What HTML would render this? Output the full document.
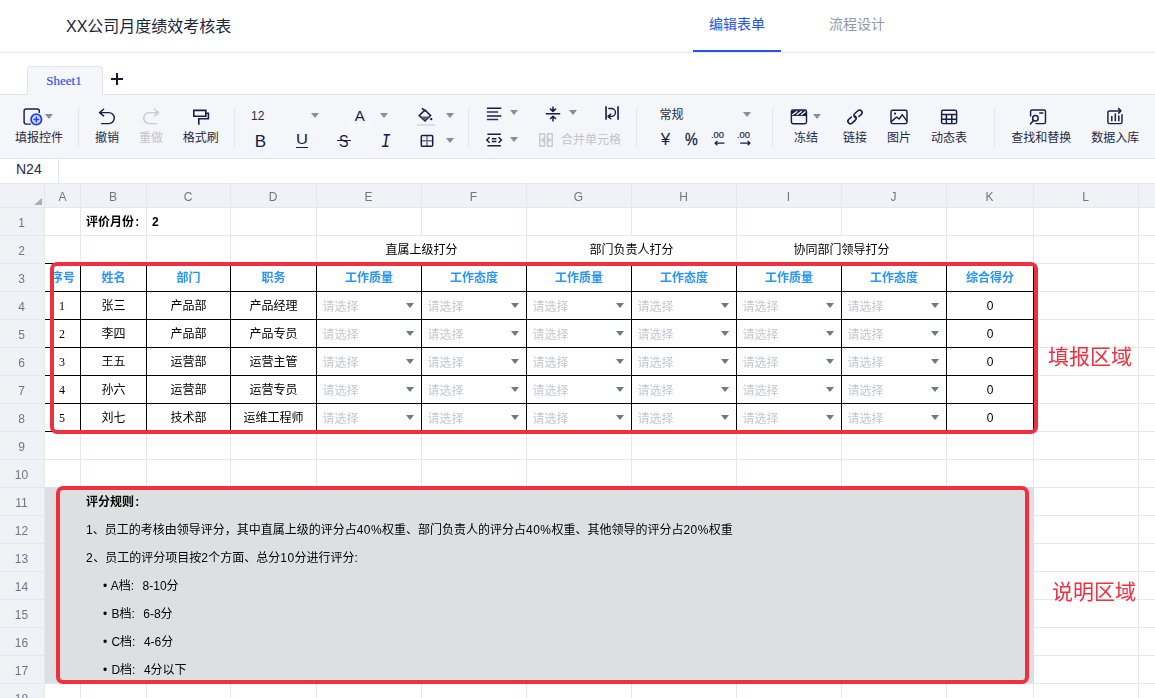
<!DOCTYPE html><html lang="zh-CN"><head><meta charset="utf-8"><title>XX公司月度绩效考核表</title><style>
*{box-sizing:border-box;margin:0;padding:0}
html,body{width:1155px;height:698px;overflow:hidden;background:#fff}
body{position:relative;font-family:"Liberation Sans","Noto Sans CJK SC",sans-serif;color:#1f2a44}
.abs{position:absolute}
#hdr{position:absolute;left:0;top:0;width:1155px;height:53px;border-bottom:1px solid #e6e8f0;background:#fff}
#title{position:absolute;left:66px;top:15px;font-size:16px;line-height:24px;color:#1c2438;white-space:nowrap}
.tab{position:absolute;top:12px;font-size:14px;line-height:24px;white-space:nowrap}
#tab1{left:709px;color:#2955e7}
#tab2{left:829px;color:#9297a6}
#tabline{position:absolute;left:693px;top:50px;width:88px;height:2px;background:#2955e7}
#sheetbar{position:absolute;left:0;top:53px;width:1155px;height:41px;background:#fff}
#sheettab{position:absolute;left:27px;top:66px;width:76px;height:29px;padding-right:2px;border:1px solid #e1e4ee;border-bottom:none;border-radius:4px 4px 0 0;background:#f5f6fa;z-index:3;
 font-family:"Liberation Serif","Noto Serif CJK SC",serif;font-size:13px;line-height:28px;text-align:center;color:#2a4ff0;-webkit-text-stroke:0.15px #2a4ff0}
#toolbar{position:absolute;left:0;top:94px;width:1155px;height:65px;background:#f5f6fa;border-top:1px solid #e1e4ee;border-bottom:1px solid #e1e4ee}
.tl{position:absolute;font-size:12px;line-height:16px;white-space:nowrap;color:#1f2a44;text-align:center}
.dis{color:#c0c4cc}
.sep{position:absolute;width:1px;background:#e4e6ee;top:107px;height:40px}
.caret{position:absolute;width:0;height:0;border-left:4px solid transparent;border-right:4px solid transparent;border-top:5px solid #8489a3}
#fbar{position:absolute;left:0;top:159px;width:1155px;height:24px;background:#fff}
#fcell{position:absolute;left:0;top:0;width:59px;height:24px;border-right:1px solid #e4e6ee;font-size:14px;line-height:20px;padding-left:16px;color:#1f2a44}
#grid{position:absolute;left:0;top:183px;width:1155px;height:515px;overflow:hidden;background:#fff}
.ch{position:absolute;top:183px;height:24px;background:#f1f2f5;font-size:12px;line-height:28px;text-align:center;color:#70758f}
.rh{position:absolute;left:0;width:43px;font-size:12px;text-align:center;color:#70758f;line-height:28px}
.vl{position:absolute;width:1px;background:#e6e6f2}
.hl{position:absolute;height:1px;background:#e6e6f2}
.c{position:absolute;font-size:12px;line-height:28px;white-space:nowrap;color:#000;text-align:center;height:28px}
.hd{color:#2894ff;font-weight:bold}
.ph{color:#c3c6d4;text-align:left;padding-left:5.5px;line-height:30px}
.tri{position:absolute;width:0;height:0;border-left:4.5px solid transparent;border-right:4.5px solid transparent;border-top:5px solid #71768f}
.bv{position:absolute;width:1px;background:#000}
.bh{position:absolute;height:1px;background:#000}
.red{position:absolute;border:4px solid #f0303f;border-radius:7px}
.lbl{position:absolute;font-size:21px;line-height:28px;color:#f0303f;white-space:nowrap}
.rule{position:absolute;font-size:12px;line-height:28px;height:28px;color:#000;white-space:nowrap;word-spacing:0.9px}
.n{letter-spacing:0.45px}
.cl{margin-left:1.2px}
.ser{font-family:"Liberation Serif","Noto Sans CJK SC",serif}
svg{position:absolute;overflow:visible}
#gridwrap{position:absolute;left:0;top:0;width:1155px;height:698px;will-change:transform;pointer-events:none}
</style></head><body>
<div id="hdr"><div id="title">XX公司月度绩效考核表</div><div class="tab" id="tab1">编辑表单</div><div class="tab" id="tab2">流程设计</div><div id="tabline"></div></div>
<div id="sheetbar"></div>
<div id="toolbar"></div>
<div id="sheettab">Sheet1</div>
<svg style="left:111px;top:73px" width="12" height="12" viewBox="0 0 12 12"><path d="M6 0v12M0 6h12" stroke="#141b33" stroke-width="2" fill="none"/></svg>
<svg style="left:20px;top:104px" width="40" height="26" viewBox="20 104 40 26" fill="none" stroke="#152048" stroke-width="1.45" stroke-linecap="round" stroke-linejoin="round"><path d="M39.3 112.5V111a2 2 0 0 0-2-2H26.1a2 2 0 0 0-2 2v11.1a2 2 0 0 0 2 2H30.5"/><circle cx="36.3" cy="119.4" r="7" fill="#f5f6fa" stroke="none"/><circle cx="36.3" cy="119.4" r="5.2" fill="#d3dbff" stroke="#1f40fb" stroke-width="1.8"/><path d="M34 119.4h4.6M36.3 117.1v4.6" stroke="#1f40fb" stroke-width="1.5"/></svg>
<svg style="left:45.2px;top:114.0px" width="8" height="5" viewBox="0 0 8 5"><path d="M0 0H8L4.0 5Z" fill="#878ba6"/></svg>
<div class="tl " style="left:11.0px;top:130px;width:56px">填报控件</div>
<div class="sep" style="left:78px"></div>
<svg style="left:95px;top:104px" width="24" height="24" viewBox="95 104 24 24" fill="none" stroke="#152048" stroke-width="1.45" stroke-linecap="round" stroke-linejoin="round"><path d="M103.6 109.3L99.6 112.6L103.6 115.9M99.8 112.6H108.8a5.5 5.5 0 0 1 0 11H101.6"/></svg>
<div class="tl " style="left:91.0px;top:130px;width:32px">撤销</div>
<svg style="left:139px;top:104px" width="24" height="24" viewBox="139 104 24 24" fill="none" stroke="#152048" stroke-width="1.45" stroke-linecap="round" stroke-linejoin="round"><g stroke="#c9cbd1"><path d="M154.6 109.3L158.6 112.6L154.6 115.9M158.4 112.6H149.2a5.5 5.5 0 0 0 0 11H156.6"/></g></svg>
<div class="tl dis" style="left:135.0px;top:130px;width:32px">重做</div>
<svg style="left:190px;top:104px" width="24" height="24" viewBox="190 104 24 24" fill="none" stroke="#152048" stroke-width="1.45" stroke-linecap="round" stroke-linejoin="round"><path d="M193.8 110.4h12v5.8h-12zM205.8 113.3h2.6v5.4h-9.6v5.2" stroke-width="1.6" stroke-linejoin="miter" stroke-linecap="square"/></svg>
<div class="tl " style="left:178.7px;top:130px;width:44px">格式刷</div>
<div class="sep" style="left:234px"></div>
<div class="tl" style="left:251px;top:108px;text-align:left">12</div>
<svg style="left:311.0px;top:113.0px" width="8" height="5" viewBox="0 0 8 5"><path d="M0 0H8L4.0 5Z" fill="#878ba6"/></svg>
<div class="abs" style="left:254.8px;top:132.2px;font-size:17px;line-height:20px;color:#152048">B</div>
<div class="abs" style="left:295.8px;top:129.2px;font-size:14.5px;line-height:20px;color:#152048;transform:scaleX(1.14);transform-origin:0 0">U</div>
<div class="abs" style="left:296px;top:146.6px;width:12px;height:1.6px;background:#152048"></div>
<div class="abs" style="left:339.2px;top:131.2px;font-size:16.5px;line-height:20px;color:#152048;transform:scaleX(0.86);transform-origin:0 0;">S</div>
<div class="abs" style="left:337px;top:140.1px;width:14px;height:1.3px;background:#152048"></div>
<div class="abs ser" style="left:381.4px;top:131.6px;font-size:20px;line-height:20px;color:#152048;font-style:italic;font-family:'Liberation Mono',monospace;transform:scaleX(0.8);transform-origin:0 0">I</div>
<div class="abs" style="left:354.8px;top:106.9px;font-size:15px;line-height:18px;color:#152048">A</div>
<div class="abs" style="left:351px;top:124px;width:18px;height:2px;background:#fff"></div>
<svg style="left:380.0px;top:113.0px" width="8" height="5" viewBox="0 0 8 5"><path d="M0 0H8L4.0 5Z" fill="#878ba6"/></svg>
<svg style="left:416px;top:104px" width="20" height="20" viewBox="416 104 20 20" fill="none" stroke="#152048" stroke-width="1.45" stroke-linecap="round" stroke-linejoin="round"><path d="M419.2 115.6L425 110L430.6 115.6L425 121Z" stroke-width="1.5" stroke-linejoin="miter"/><path d="M420.6 116.4H429.4L425 120.4Z" fill="#5a6180" stroke="none"/><path d="M422.4 108.6L425 111" stroke-width="1.5"/><circle cx="431.2" cy="119.1" r="1.2" fill="#152048" stroke="none"/></svg>
<div class="abs" style="left:417px;top:124px;width:18px;height:2px;background:#dcdde3"></div>
<svg style="left:446.0px;top:113.0px" width="8" height="5" viewBox="0 0 8 5"><path d="M0 0H8L4.0 5Z" fill="#878ba6"/></svg>
<svg style="left:418px;top:132px" width="18" height="18" viewBox="418 132 18 18" fill="none" stroke="#152048" stroke-width="1.45" stroke-linecap="round" stroke-linejoin="round"><path d="M427 135.5V146.2M421.4 140.8H432.6" stroke="#6a7090" stroke-width="1.4"/><rect x="421.3" y="135.4" width="11.4" height="10.8" rx="1" stroke-width="1.5"/></svg>
<svg style="left:446.0px;top:138.2px" width="8" height="5" viewBox="0 0 8 5"><path d="M0 0H8L4.0 5Z" fill="#878ba6"/></svg>
<div class="sep" style="left:468px"></div>
<svg style="left:484px;top:104px" width="20" height="20" viewBox="484 104 20 20" fill="none" stroke="#152048" stroke-width="1.45" stroke-linecap="round" stroke-linejoin="round"><path d="M486.9 108.2H501.3M486.9 115.9H501.3" stroke-width="1.5" stroke-linecap="butt"/><path d="M486.9 112.1H498.1M486.9 119.6H498.1" stroke-width="1.5" stroke-linecap="butt" stroke="#2c3556"/></svg>
<svg style="left:510.0px;top:110.2px" width="8" height="5" viewBox="0 0 8 5"><path d="M0 0H8L4.0 5Z" fill="#878ba6"/></svg>
<svg style="left:544px;top:104px" width="20" height="20" viewBox="544 104 20 20" fill="none" stroke="#152048" stroke-width="1.45" stroke-linecap="round" stroke-linejoin="round"><path d="M545.8 113.8H560.2M553 106.4V111M550 108.6L553 111.4L556 108.6M553 121.4V116.6M550 119L553 116.2L556 119" stroke-width="1.5" stroke-linecap="butt"/></svg>
<svg style="left:569.0px;top:110.2px" width="8" height="5" viewBox="0 0 8 5"><path d="M0 0H8L4.0 5Z" fill="#878ba6"/></svg>
<svg style="left:604px;top:104px" width="18" height="18" viewBox="604 104 18 18" fill="none" stroke="#152048" stroke-width="1.45" stroke-linecap="round" stroke-linejoin="round"><path d="M606.05 106.2V119.7M618.05 106.2V119.7" stroke-width="1.9" stroke-linecap="butt" stroke="#333e6a"/><path d="M608.8 108.5H611.5a3.95 3.95 0 0 1 0 7.9H608.6M610.8 114L608 116.4L610.8 118.8" stroke-width="1.4"/></svg>
<svg style="left:484px;top:132px" width="20" height="18" viewBox="484 132 20 18" fill="none" stroke="#152048" stroke-width="1.45" stroke-linecap="round" stroke-linejoin="round"><path d="M487.4 134.2H500.8M487.4 145.7H500.8" stroke-width="1.6" stroke-linecap="butt"/><path d="M489.6 137.2L486.8 140L489.6 142.8M498.6 137.2L501.4 140L498.6 142.8" stroke-width="1.5" stroke-linecap="butt" stroke-linejoin="miter"/><path d="M491.8 138.7H496.4M491.8 141.5H496.4" stroke-width="1.4" stroke-linecap="butt"/></svg>
<svg style="left:510.0px;top:137.4px" width="8" height="5" viewBox="0 0 8 5"><path d="M0 0H8L4.0 5Z" fill="#878ba6"/></svg>
<svg style="left:538px;top:132px" width="16" height="16" viewBox="538 132 16 16" fill="none" stroke="#152048" stroke-width="1.45" stroke-linecap="round" stroke-linejoin="round"><g stroke="#c9cacf" stroke-width="1.4" stroke-linecap="butt"><rect x="539.7" y="133.8" width="4.8" height="12.5" rx="0.4"/><rect x="547.5" y="133.8" width="4.8" height="12.5" rx="0.4"/><path d="M539.7 140H544.6M542.6 138L544.9 140L542.6 142M552.3 140H547.4M549.4 138L547.1 140L549.4 142" stroke-width="1.5"/><path d="M546 134V146" stroke="#e4e5ea" stroke-width="1.6"/></g></svg>
<div class="tl dis" style="left:561px;top:131.5px;text-align:left">合并单元格</div>
<div class="sep" style="left:636px"></div>
<div class="tl" style="left:659.5px;top:107.2px;text-align:left">常规</div>
<svg style="left:743.0px;top:112.3px" width="8" height="5" viewBox="0 0 8 5"><path d="M0 0H8L4.0 5Z" fill="#878ba6"/></svg>
<div class="abs" style="left:660.8px;top:130.2px;font-size:17px;line-height:20px;color:#152048">¥</div>
<div class="abs" style="left:685.4px;top:130px;font-size:17px;line-height:20px;color:#152048;-webkit-text-stroke:0.3px #152048;transform:scaleX(0.84);transform-origin:0 0">%</div>
<div class="abs" style="left:711.2px;top:130.2px;font-size:12px;line-height:12px;color:#152048;transform:scale(0.78);transform-origin:0 0;-webkit-text-stroke:0.2px #152048">.00</div>
<div class="abs" style="left:737px;top:130.2px;font-size:12px;line-height:12px;color:#152048;transform:scale(0.78);transform-origin:0 0;-webkit-text-stroke:0.2px #152048">.00</div>
<svg style="left:712px;top:138px" width="16" height="10" viewBox="712 138 16 10" fill="none" stroke="#152048" stroke-width="1.45" stroke-linecap="round" stroke-linejoin="round"><path d="M724.4 143.1H715.4M717.4 141L715 143.1L717.4 145.2" stroke-width="1.25" stroke-linecap="butt"/></svg>
<svg style="left:738px;top:138px" width="16" height="10" viewBox="738 138 16 10" fill="none" stroke="#152048" stroke-width="1.45" stroke-linecap="round" stroke-linejoin="round"><path d="M740.2 143.1H749.6M747.6 141L750 143.1L747.6 145.2" stroke-width="1.25" stroke-linecap="butt"/></svg>
<div class="sep" style="left:772px"></div>
<svg style="left:788px;top:106px" width="22" height="22" viewBox="788 106 22 22" fill="none" stroke="#152048" stroke-width="1.45" stroke-linecap="round" stroke-linejoin="round"><rect x="791.5" y="110.4" width="15" height="5.6" fill="#152048" stroke="none"/><path d="M792.2 115L797.2 111.2M796.6 115L801.6 111.2M801 115L806 111.2" stroke="#f5f6fa" stroke-width="1.4" stroke-linecap="butt"/><rect x="791.4" y="109.9" width="15.1" height="13.8" rx="1.6"/></svg>
<svg style="left:813.0px;top:114.0px" width="8" height="5" viewBox="0 0 8 5"><path d="M0 0H8L4.0 5Z" fill="#878ba6"/></svg>
<div class="tl " style="left:790.0px;top:130px;width:32px">冻结</div>
<svg style="left:844px;top:106px" width="22" height="22" viewBox="844 106 22 22" fill="none" stroke="#152048" stroke-width="1.45" stroke-linecap="round" stroke-linejoin="round"><path d="M858.9 116.5 L861.4 114.3 A2.50 2.50 0 0 0 858.2 110.5 L854.8 113.5 A2.50 2.50 0 0 0 856.4 117.9M851.3 117.1 L848.6 119.5 A2.50 2.50 0 0 0 851.8 123.3 L855.4 120.1 A2.50 2.50 0 0 0 853.8 115.7" stroke-width="1.6"/></svg>
<div class="tl " style="left:839.0px;top:130px;width:32px">链接</div>
<svg style="left:888px;top:106px" width="22" height="22" viewBox="888 106 22 22" fill="none" stroke="#152048" stroke-width="1.45" stroke-linecap="round" stroke-linejoin="round"><rect x="891" y="110.2" width="16" height="13.4" rx="1.6"/><circle cx="895" cy="113.6" r="1.1" fill="#152048" stroke="none"/><path d="M891.6 121.4L896.6 117L899.2 119L902.2 114.6L906.6 120.6" stroke-width="1.4"/></svg>
<div class="tl " style="left:883.0px;top:130px;width:32px">图片</div>
<svg style="left:938px;top:106px" width="22" height="22" viewBox="938 106 22 22" fill="none" stroke="#152048" stroke-width="1.45" stroke-linecap="round" stroke-linejoin="round"><rect x="941.6" y="110.2" width="15" height="13.4" rx="1.6"/><path d="M941.6 114.6H956.6M941.6 119.2H956.6M946.4 114.6V123.6M951.8 114.6V123.6" stroke-linecap="butt" stroke-width="1.5"/></svg>
<div class="tl " style="left:927.0px;top:130px;width:44px">动态表</div>
<div class="sep" style="left:994px"></div>
<svg style="left:1026px;top:106px" width="24" height="22" viewBox="1026 106 24 22" fill="none" stroke="#152048" stroke-width="1.45" stroke-linecap="round" stroke-linejoin="round"><path d="M1030.6 116V111.5a1.6 1.6 0 0 1 1.6-1.6H1043.9a1.6 1.6 0 0 1 1.6 1.6V122a1.6 1.6 0 0 1-1.6 1.6H1036"/><circle cx="1035.4" cy="118.2" r="2.8" stroke-width="1.5"/><path d="M1033.4 120.4L1030.4 123.9M1039.8 113H1042.8" stroke-width="1.5"/></svg>
<div class="tl " style="left:1007.3px;top:130px;width:68px">查找和替换</div>
<svg style="left:1104px;top:104px" width="24" height="24" viewBox="1104 104 24 24" fill="none" stroke="#152048" stroke-width="1.45" stroke-linecap="round" stroke-linejoin="round"><path d="M1120 110.9H1109.5a1.6 1.6 0 0 0-1.6 1.6V122a1.6 1.6 0 0 0 1.6 1.6H1120.4a1.6 1.6 0 0 0 1.6-1.6V114.6"/><path d="M1118.6 108.6L1120.9 110.9L1118.6 113.2" stroke-width="1.5"/><path d="M1111.8 116V121.2M1115.3 113.4V121.2M1118.8 115.4V121.2" stroke-width="1.5" stroke-linecap="butt"/></svg>
<div class="tl " style="left:1087.2px;top:130px;width:56px">数据入库</div>
<div id="fbar"><div id="fcell">N24</div></div>
<div id="gridwrap">
<div class="abs" style="left:0;top:183px;width:1155px;height:24px;background:#f1f2f5"></div>
<div class="abs" style="left:0;top:207px;width:44px;height:491px;background:#f1f2f5"></div>
<svg style="left:34px;top:198px" width="8" height="7" viewBox="0 0 8 7"><path d="M8 0V7H0Z" fill="#acacbb"/></svg>
<div class="ch" style="left:45px;width:35px">A</div>
<div class="ch" style="left:80px;width:66px">B</div>
<div class="ch" style="left:146px;width:84px">C</div>
<div class="ch" style="left:230px;width:86px">D</div>
<div class="ch" style="left:316px;width:105px">E</div>
<div class="ch" style="left:421px;width:105px">F</div>
<div class="ch" style="left:526px;width:105px">G</div>
<div class="ch" style="left:631px;width:105px">H</div>
<div class="ch" style="left:736px;width:105px">I</div>
<div class="ch" style="left:841px;width:105px">J</div>
<div class="ch" style="left:946px;width:87px">K</div>
<div class="ch" style="left:1033px;width:105px">L</div>
<div class="ch" style="left:1138px;width:105px">M</div>
<div class="rh" style="top:209px;height:28px">1</div>
<div class="rh" style="top:237px;height:28px">2</div>
<div class="rh" style="top:265px;height:28px">3</div>
<div class="rh" style="top:293px;height:28px">4</div>
<div class="rh" style="top:321px;height:28px">5</div>
<div class="rh" style="top:349px;height:28px">6</div>
<div class="rh" style="top:377px;height:28px">7</div>
<div class="rh" style="top:405px;height:28px">8</div>
<div class="rh" style="top:433px;height:28px">9</div>
<div class="rh" style="top:461px;height:28px">10</div>
<div class="rh" style="top:489px;height:28px">11</div>
<div class="rh" style="top:517px;height:28px">12</div>
<div class="rh" style="top:545px;height:28px">13</div>
<div class="rh" style="top:573px;height:28px">14</div>
<div class="rh" style="top:601px;height:28px">15</div>
<div class="rh" style="top:629px;height:28px">16</div>
<div class="rh" style="top:657px;height:28px">17</div>
<div class="rh" style="top:685px;height:28px">18</div>
<div class="hl" style="left:0;top:183px;width:1155px"></div>
<div class="hl" style="left:0;top:207px;width:1155px"></div>
<div class="hl" style="left:0;top:235px;width:1155px"></div>
<div class="hl" style="left:0;top:263px;width:1155px"></div>
<div class="hl" style="left:0;top:291px;width:1155px"></div>
<div class="hl" style="left:0;top:319px;width:1155px"></div>
<div class="hl" style="left:0;top:347px;width:1155px"></div>
<div class="hl" style="left:0;top:375px;width:1155px"></div>
<div class="hl" style="left:0;top:403px;width:1155px"></div>
<div class="hl" style="left:0;top:431px;width:1155px"></div>
<div class="hl" style="left:0;top:459px;width:1155px"></div>
<div class="hl" style="left:0;top:487px;width:1155px"></div>
<div class="hl" style="left:0;top:515px;width:1155px"></div>
<div class="hl" style="left:0;top:543px;width:1155px"></div>
<div class="hl" style="left:0;top:571px;width:1155px"></div>
<div class="hl" style="left:0;top:599px;width:1155px"></div>
<div class="hl" style="left:0;top:627px;width:1155px"></div>
<div class="hl" style="left:0;top:655px;width:1155px"></div>
<div class="hl" style="left:0;top:683px;width:1155px"></div>
<div class="hl" style="left:0;top:711px;width:1155px"></div>
<div class="vl" style="left:44px;top:183px;height:515px"></div>
<div class="vl" style="left:80px;top:183px;height:515px"></div>
<div class="vl" style="left:146px;top:183px;height:515px"></div>
<div class="vl" style="left:230px;top:183px;height:515px"></div>
<div class="vl" style="left:316px;top:183px;height:515px"></div>
<div class="vl" style="left:421px;top:183px;height:515px"></div>
<div class="vl" style="left:526px;top:183px;height:515px"></div>
<div class="vl" style="left:631px;top:183px;height:515px"></div>
<div class="vl" style="left:736px;top:183px;height:515px"></div>
<div class="vl" style="left:841px;top:183px;height:515px"></div>
<div class="vl" style="left:946px;top:183px;height:515px"></div>
<div class="vl" style="left:1033px;top:183px;height:515px"></div>
<div class="vl" style="left:1138px;top:183px;height:515px"></div>
<div class="vl" style="left:1243px;top:183px;height:515px"></div>
<div class="abs" style="left:45px;top:487px;width:989px;height:196px;background:#dde0e3"></div>
<div class="c " style="left:81px;top:208px;width:65px;text-align:left;padding-left:5px;font-weight:bold">评价月份<span class="cl">:</span></div>
<div class="c " style="left:147px;top:208px;width:83px;text-align:left;padding-left:5px;font-weight:bold">2</div>
<div class="abs" style="left:421px;top:236px;width:1px;height:27px;background:#fff"></div>
<div class="abs" style="left:631px;top:236px;width:1px;height:27px;background:#fff"></div>
<div class="abs" style="left:841px;top:236px;width:1px;height:27px;background:#fff"></div>
<div class="c " style="left:317px;top:236px;width:209px;">直属上级打分</div>
<div class="c " style="left:527px;top:236px;width:209px;">部门负责人打分</div>
<div class="c " style="left:737px;top:236px;width:209px;">协同部门领导打分</div>
<div class="c hd" style="left:46px;top:264px;width:34px;">序号</div>
<div class="c hd" style="left:81px;top:264px;width:65px;">姓名</div>
<div class="c hd" style="left:147px;top:264px;width:83px;">部门</div>
<div class="c hd" style="left:231px;top:264px;width:85px;">职务</div>
<div class="c hd" style="left:317px;top:264px;width:104px;">工作质量</div>
<div class="c hd" style="left:422px;top:264px;width:104px;">工作态度</div>
<div class="c hd" style="left:527px;top:264px;width:104px;">工作质量</div>
<div class="c hd" style="left:632px;top:264px;width:104px;">工作态度</div>
<div class="c hd" style="left:737px;top:264px;width:104px;">工作质量</div>
<div class="c hd" style="left:842px;top:264px;width:104px;">工作态度</div>
<div class="c hd" style="left:947px;top:264px;width:86px;">综合得分</div>
<div class="c ser" style="left:46px;top:292px;width:34px;padding-right:2px">1</div>
<div class="c " style="left:81px;top:292px;width:65px;">张三</div>
<div class="c " style="left:147px;top:292px;width:83px;">产品部</div>
<div class="c " style="left:231px;top:292px;width:85px;">产品经理</div>
<div class="c ph" style="left:317px;top:292px;width:104px;">请选择</div>
<div class="tri" style="left:406px;top:303px"></div>
<div class="c ph" style="left:422px;top:292px;width:104px;">请选择</div>
<div class="tri" style="left:511px;top:303px"></div>
<div class="c ph" style="left:527px;top:292px;width:104px;">请选择</div>
<div class="tri" style="left:616px;top:303px"></div>
<div class="c ph" style="left:632px;top:292px;width:104px;">请选择</div>
<div class="tri" style="left:721px;top:303px"></div>
<div class="c ph" style="left:737px;top:292px;width:104px;">请选择</div>
<div class="tri" style="left:826px;top:303px"></div>
<div class="c ph" style="left:842px;top:292px;width:104px;">请选择</div>
<div class="tri" style="left:931px;top:303px"></div>
<div class="c " style="left:947px;top:292px;width:86px;">0</div>
<div class="c ser" style="left:46px;top:320px;width:34px;padding-right:2px">2</div>
<div class="c " style="left:81px;top:320px;width:65px;">李四</div>
<div class="c " style="left:147px;top:320px;width:83px;">产品部</div>
<div class="c " style="left:231px;top:320px;width:85px;">产品专员</div>
<div class="c ph" style="left:317px;top:320px;width:104px;">请选择</div>
<div class="tri" style="left:406px;top:331px"></div>
<div class="c ph" style="left:422px;top:320px;width:104px;">请选择</div>
<div class="tri" style="left:511px;top:331px"></div>
<div class="c ph" style="left:527px;top:320px;width:104px;">请选择</div>
<div class="tri" style="left:616px;top:331px"></div>
<div class="c ph" style="left:632px;top:320px;width:104px;">请选择</div>
<div class="tri" style="left:721px;top:331px"></div>
<div class="c ph" style="left:737px;top:320px;width:104px;">请选择</div>
<div class="tri" style="left:826px;top:331px"></div>
<div class="c ph" style="left:842px;top:320px;width:104px;">请选择</div>
<div class="tri" style="left:931px;top:331px"></div>
<div class="c " style="left:947px;top:320px;width:86px;">0</div>
<div class="c ser" style="left:46px;top:348px;width:34px;padding-right:2px">3</div>
<div class="c " style="left:81px;top:348px;width:65px;">王五</div>
<div class="c " style="left:147px;top:348px;width:83px;">运营部</div>
<div class="c " style="left:231px;top:348px;width:85px;">运营主管</div>
<div class="c ph" style="left:317px;top:348px;width:104px;">请选择</div>
<div class="tri" style="left:406px;top:359px"></div>
<div class="c ph" style="left:422px;top:348px;width:104px;">请选择</div>
<div class="tri" style="left:511px;top:359px"></div>
<div class="c ph" style="left:527px;top:348px;width:104px;">请选择</div>
<div class="tri" style="left:616px;top:359px"></div>
<div class="c ph" style="left:632px;top:348px;width:104px;">请选择</div>
<div class="tri" style="left:721px;top:359px"></div>
<div class="c ph" style="left:737px;top:348px;width:104px;">请选择</div>
<div class="tri" style="left:826px;top:359px"></div>
<div class="c ph" style="left:842px;top:348px;width:104px;">请选择</div>
<div class="tri" style="left:931px;top:359px"></div>
<div class="c " style="left:947px;top:348px;width:86px;">0</div>
<div class="c ser" style="left:46px;top:376px;width:34px;padding-right:2px">4</div>
<div class="c " style="left:81px;top:376px;width:65px;">孙六</div>
<div class="c " style="left:147px;top:376px;width:83px;">运营部</div>
<div class="c " style="left:231px;top:376px;width:85px;">运营专员</div>
<div class="c ph" style="left:317px;top:376px;width:104px;">请选择</div>
<div class="tri" style="left:406px;top:387px"></div>
<div class="c ph" style="left:422px;top:376px;width:104px;">请选择</div>
<div class="tri" style="left:511px;top:387px"></div>
<div class="c ph" style="left:527px;top:376px;width:104px;">请选择</div>
<div class="tri" style="left:616px;top:387px"></div>
<div class="c ph" style="left:632px;top:376px;width:104px;">请选择</div>
<div class="tri" style="left:721px;top:387px"></div>
<div class="c ph" style="left:737px;top:376px;width:104px;">请选择</div>
<div class="tri" style="left:826px;top:387px"></div>
<div class="c ph" style="left:842px;top:376px;width:104px;">请选择</div>
<div class="tri" style="left:931px;top:387px"></div>
<div class="c " style="left:947px;top:376px;width:86px;">0</div>
<div class="c ser" style="left:46px;top:404px;width:34px;padding-right:2px">5</div>
<div class="c " style="left:81px;top:404px;width:65px;">刘七</div>
<div class="c " style="left:147px;top:404px;width:83px;">技术部</div>
<div class="c " style="left:231px;top:404px;width:85px;">运维工程师</div>
<div class="c ph" style="left:317px;top:404px;width:104px;">请选择</div>
<div class="tri" style="left:406px;top:415px"></div>
<div class="c ph" style="left:422px;top:404px;width:104px;">请选择</div>
<div class="tri" style="left:511px;top:415px"></div>
<div class="c ph" style="left:527px;top:404px;width:104px;">请选择</div>
<div class="tri" style="left:616px;top:415px"></div>
<div class="c ph" style="left:632px;top:404px;width:104px;">请选择</div>
<div class="tri" style="left:721px;top:415px"></div>
<div class="c ph" style="left:737px;top:404px;width:104px;">请选择</div>
<div class="tri" style="left:826px;top:415px"></div>
<div class="c ph" style="left:842px;top:404px;width:104px;">请选择</div>
<div class="tri" style="left:931px;top:415px"></div>
<div class="c " style="left:947px;top:404px;width:86px;">0</div>
<div class="bh" style="left:45px;top:263px;width:989px"></div>
<div class="bh" style="left:45px;top:291px;width:989px"></div>
<div class="bh" style="left:45px;top:319px;width:989px"></div>
<div class="bh" style="left:45px;top:347px;width:989px"></div>
<div class="bh" style="left:45px;top:375px;width:989px"></div>
<div class="bh" style="left:45px;top:403px;width:989px"></div>
<div class="bh" style="left:45px;top:431px;width:989px"></div>
<div class="bv" style="left:80px;top:263px;height:169px"></div>
<div class="bv" style="left:146px;top:263px;height:169px"></div>
<div class="bv" style="left:230px;top:263px;height:169px"></div>
<div class="bv" style="left:316px;top:263px;height:169px"></div>
<div class="bv" style="left:421px;top:263px;height:169px"></div>
<div class="bv" style="left:526px;top:263px;height:169px"></div>
<div class="bv" style="left:631px;top:263px;height:169px"></div>
<div class="bv" style="left:736px;top:263px;height:169px"></div>
<div class="bv" style="left:841px;top:263px;height:169px"></div>
<div class="bv" style="left:946px;top:263px;height:169px"></div>
<div class="bv" style="left:1033px;top:263px;height:169px"></div>
<div class="rule" style="left:86px;top:488px;font-weight:bold">评分规则<span class="cl">:</span></div>
<div class="rule" style="left:86px;top:516px;">1、员工的考核由领导评分，其中直属上级的评分占<span class="n">40%</span>权重、部门负责人的评分占<span class="n">40%</span>权重、其他领导的评分占<span class="n">20%</span>权重</div>
<div class="rule" style="left:86px;top:544px;"><span class="n">2</span>、员工的评分项目按<span class="n">2</span>个方面、总分<span class="n">10</span>分进行评分:</div>
<div class="rule" style="left:103px;top:572px;">• A档:&nbsp; 8-10分</div>
<div class="rule" style="left:103px;top:600px;">• B档:&nbsp; 6-8分</div>
<div class="rule" style="left:103px;top:628px;">• C档:&nbsp; 4-6分</div>
<div class="rule" style="left:103px;top:656px;">• D档:&nbsp; 4分以下</div>
<div class="red" style="left:50px;top:262px;width:988px;height:172px"></div>
<div class="red" style="left:56px;top:486px;width:973px;height:198px"></div>
<div class="lbl" style="left:1048px;top:343px">填报区域</div>
<div class="lbl" style="left:1052px;top:578px">说明区域</div>
</div>
</body></html>
